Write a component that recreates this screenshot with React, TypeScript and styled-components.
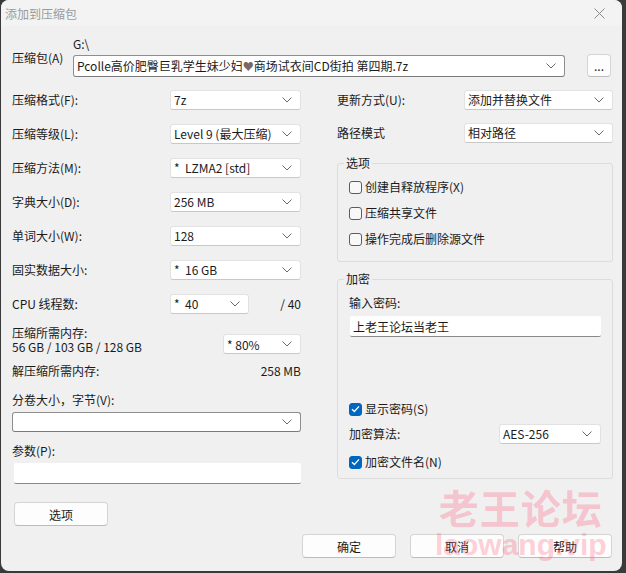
import React from 'react';
import styled, { createGlobalStyle } from 'styled-components';

const Global = createGlobalStyle`
    html, body {
        margin: 0;
        padding: 0;
        background: #3a3a3a;
    }
    body {
        width: 626px;
        height: 573px;
        overflow: hidden;
        font-family: "Noto Sans CJK SC", "Noto Sans", sans-serif;
        font-size: 12px;
        color: #1b1b1b;
    }
`;

const Window = styled.div`
    position: relative;
    width: 621px;
    height: 571px;
    margin-left: 1px;
    background: #f0f0f0;
    border-radius: 8px;
    overflow: hidden;
    display: flex;
    flex-direction: column;
`;

const TitleBar = styled.div`
    height: 26px;
    display: flex;
    align-items: center;
    justify-content: space-between;
    padding: 0 17px 0 4px;
    background: #f3f3f3;
    color: #9a9a9a;
    font-size: 12px;
`;

const Content = styled.div`
    padding: 0 10px 0 11px;
    display: flex;
    flex-direction: column;
`;

const ArchiveRow = styled.div`
    margin-top: 11px;
    display: flex;
    align-items: center;
`;

const ArchiveLabel = styled.div`
    width: 61px;
    line-height: 16px;
    padding-top: 2px;
`;

const ArchivePath = styled.div`
    display: flex;
    flex-direction: column;
    gap: 4px;
    line-height: 14px;
`;

const Heart = styled.span`
    color: #7a6868;
    font-size: 11px;
`;

const Columns = styled.div`
    margin-top: 13px;
    display: grid;
    grid-template-columns: 289px 276px;
    column-gap: 36px;
    align-items: start;
`;

const Column = styled.div`
    display: flex;
    flex-direction: column;
`;

const Row = styled.div<{ $mt?: number; $h?: number }>`
    display: flex;
    align-items: center;
    justify-content: space-between;
    height: ${(p) => p.$h ?? 20}px;
    margin-top: ${(p) => p.$mt ?? 0}px;
    line-height: 16px;
    white-space: nowrap;
`;

const Label = styled.div<{ $mt?: number }>`
    line-height: 16px;
    margin-top: ${(p) => p.$mt ?? 0}px;
    white-space: nowrap;
`;

const ComboBox = styled.div<{ $w?: number; $dark?: boolean; $h?: number }>`
    box-sizing: border-box;
    width: ${(p) => (p.$w ? `${p.$w}px` : '100%')};
    height: ${(p) => p.$h ?? 20}px;
    display: flex;
    align-items: center;
    padding: 0 8px 0 3px;
    background: #ffffff;
    border: 1px solid ${(p) => (p.$dark ? '#8e8e8e' : '#e2e2e2')};
    border-bottom-color: ${(p) => (p.$dark ? '#7a7a7a' : '#c8c8c8')};
    border-radius: 3px;
    white-space: pre;
    svg {
        margin-left: auto;
        flex-shrink: 0;
    }
`;

const TextInput = styled.div<{ $w?: number; $mt?: number }>`
    box-sizing: border-box;
    width: ${(p) => (p.$w ? `${p.$w}px` : '100%')};
    height: 21px;
    margin-top: ${(p) => p.$mt ?? 0}px;
    background: #ffffff;
    border-bottom: 1px solid #8a8a8a;
    border-radius: 2px;
    padding: 0 3px;
    display: flex;
    align-items: center;
    font-size: 12px;
`;

const Button = styled.div<{ $w?: number; $h?: number; $mt?: number }>`
    box-sizing: border-box;
    width: ${(p) => p.$w ?? 94}px;
    height: ${(p) => p.$h ?? 24}px;
    margin-top: ${(p) => p.$mt ?? 0}px;
    display: flex;
    align-items: center;
    justify-content: center;
    background: #fdfdfd;
    border: 1px solid #d4d4d4;
    border-bottom-color: #bcbcbc;
    border-radius: 4px;
    color: #1b1b1b;
`;

const MemoryRow = styled.div`
    margin-top: 12px;
    display: flex;
    align-items: flex-end;
    justify-content: space-between;
`;

const MemoryLabel = styled.div`
    line-height: 14px;
    white-space: nowrap;
`;

const Group = styled.fieldset<{ $mt?: number }>`
    margin: ${(p) => p.$mt ?? 0}px 0 0 0;
    padding: 8px 11px 14px 11px;
    border: 1px solid #dcdcdc;
    border-radius: 3px;
    min-width: 0;
    display: flex;
    flex-direction: column;
    legend {
        padding: 0 2px;
        margin-left: -5px;
        line-height: 16px;
    }
`;

const CheckRow = styled.label<{ $mt?: number }>`
    display: flex;
    align-items: center;
    gap: 3px;
    height: 16px;
    margin-top: ${(p) => p.$mt ?? 0}px;
    line-height: 16px;
    white-space: nowrap;
`;

const Box = styled.span<{ $checked?: boolean }>`
    box-sizing: border-box;
    width: 13px;
    height: 13px;
    border-radius: 3px;
    display: flex;
    align-items: center;
    justify-content: center;
    background: ${(p) => (p.$checked ? '#0067c0' : '#f8f8f8')};
    border: 1px solid ${(p) => (p.$checked ? '#0067c0' : '#5d5d5d')};
`;

const Footer = styled.div`
    margin-top: 8px;
    display: flex;
    justify-content: flex-end;
    gap: 14px;
    padding-right: 0;
`;

const Watermark = styled.div`
    position: absolute;
    left: 434px;
    top: 487px;
    display: flex;
    flex-direction: column;
    align-items: center;
    color: rgba(255, 90, 120, 0.3);
    font-weight: 700;
    pointer-events: none;
    .cn {
        font-family: "Noto Sans CJK SC", sans-serif;
        font-size: 40px;
        line-height: 40px;
        letter-spacing: 1px;
    }
    .en {
        font-family: "Liberation Sans", Arial, sans-serif;
        font-size: 30px;
        line-height: 34px;
        margin-top: 1px;
    }
`;

const Chevron = () => (
    <svg width="10" height="6" viewBox="0 0 10 6">
        <polyline points="0.5,0.5 5,5 9.5,0.5" fill="none" stroke="#6a6a6a" strokeWidth="1" />
    </svg>
);

const Check = () => (
    <svg width="9" height="8" viewBox="0 0 9 8">
        <polyline points="1,4.2 3.4,6.5 8,1.4" fill="none" stroke="#ffffff" strokeWidth="1.3" />
    </svg>
);

const Combo: React.FC<{ w?: number; dark?: boolean; children?: React.ReactNode }> = ({ w, dark, children }) => (
    <ComboBox $w={w} $dark={dark}>
        <span>{children}</span>
        <Chevron />
    </ComboBox>
);

const CheckBox: React.FC<{ checked?: boolean; mt?: number; children: React.ReactNode }> = ({ checked, mt, children }) => (
    <CheckRow $mt={mt}>
        <Box $checked={checked}>{checked && <Check />}</Box>
        {children}
    </CheckRow>
);

const leftFields: [string, string][] = [
    ['压缩格式(F):', '7z'],
    ['压缩等级(L):', 'Level 9 (最大压缩)'],
    ['压缩方法(M):', '*  LZMA2 [std]'],
    ['字典大小(D):', '256 MB'],
    ['单词大小(W):', '128'],
    ['固实数据大小:', '*  16 GB'],
];

export default function App() {
    return (
        <>
            <Global />
            <Window>
                <TitleBar>
                    <span>添加到压缩包</span>
                    <svg width="11" height="11" viewBox="0 0 11 11">
                        <path d="M0.5 0.5 L10.5 10.5 M10.5 0.5 L0.5 10.5" stroke="#8a8a8a" strokeWidth="1" />
                    </svg>
                </TitleBar>
                <Content>
                    <ArchiveRow>
                        <ArchiveLabel>压缩包(A)</ArchiveLabel>
                        <ArchivePath>
                            <span>G:\</span>
                            <ComboBox $w={492} $h={22} $dark>
                                <span>
                                    Pcolle高价肥臀巨乳学生妹少妇<Heart>♥</Heart>商场试衣间CD街拍 第四期.7z
                                </span>
                                <Chevron />
                            </ComboBox>
                        </ArchivePath>
                        <Button $w={24} $h={23} style={{ marginLeft: 22, marginTop: 17 }}>
                            ...
                        </Button>
                    </ArchiveRow>

                    <Columns>
                        <Column>
                            {leftFields.map(([label, value], i) => (
                                <Row key={label} $mt={i === 0 ? 0 : 14}>
                                    <span>{label}</span>
                                    <Combo w={131}>{value}</Combo>
                                </Row>
                            ))}
                            <Row $mt={14}>
                                <span style={{ width: 158 }}>CPU 线程数:</span>
                                <Combo w={79}>{'*  40'}</Combo>
                                <span style={{ marginLeft: 'auto' }}>/ 40</span>
                            </Row>
                            <MemoryRow>
                                <MemoryLabel>
                                    压缩所需内存:
                                    <br />
                                    56 GB / 103 GB / 128 GB
                                </MemoryLabel>
                                <Combo w={78}>* 80%</Combo>
                            </MemoryRow>
                            <Row $mt={9} $h={16}>
                                <span>解压缩所需内存:</span>
                                <span>258 MB</span>
                            </Row>
                            <Label $mt={13}>分卷大小，字节(V):</Label>
                            <div style={{ marginTop: 4 }}>
                                <Combo dark />
                            </div>
                            <Label $mt={11}>参数(P):</Label>
                            <TextInput $mt={4} style={{ marginLeft: 2 }} $w={287} />
                            <Button $w={94} $mt={18} style={{ marginLeft: 2 }}>
                                选项
                            </Button>
                        </Column>

                        <Column>
                            <Row>
                                <span>更新方式(U):</span>
                                <Combo w={149}>添加并替换文件</Combo>
                            </Row>
                            <Row $mt={13}>
                                <span>路径模式</span>
                                <Combo w={149}>相对路径</Combo>
                            </Row>
                            <Group $mt={12}>
                                <legend>选项</legend>
                                <CheckBox>创建自释放程序(X)</CheckBox>
                                <CheckBox mt={10}>压缩共享文件</CheckBox>
                                <CheckBox mt={10}>操作完成后删除源文件</CheckBox>
                            </Group>
                            <Group $mt={9} style={{ paddingBottom: 8 }}>
                                <legend>加密</legend>
                                <Label>输入密码:</Label>
                                <TextInput $mt={5} $w={251} style={{ marginLeft: 1 }}>
                                    上老王论坛当老王
                                </TextInput>
                                <CheckBox checked mt={64}>
                                    显示密码(S)
                                </CheckBox>
                                <Row $mt={7} style={{ paddingRight: 0 }}>
                                    <span>加密算法:</span>
                                    <Combo w={102}>AES-256</Combo>
                                </Row>
                                <CheckBox checked mt={10}>
                                    加密文件名(N)
                                </CheckBox>
                            </Group>
                        </Column>
                    </Columns>

                    <Footer>
                        <Button>确定</Button>
                        <Button>取消</Button>
                        <Button>帮助</Button>
                    </Footer>
                </Content>
                <Watermark>
                    <span className="cn">老王论坛</span>
                    <span className="en">laowang.vip</span>
                </Watermark>
            </Window>
        </>
    );
}
